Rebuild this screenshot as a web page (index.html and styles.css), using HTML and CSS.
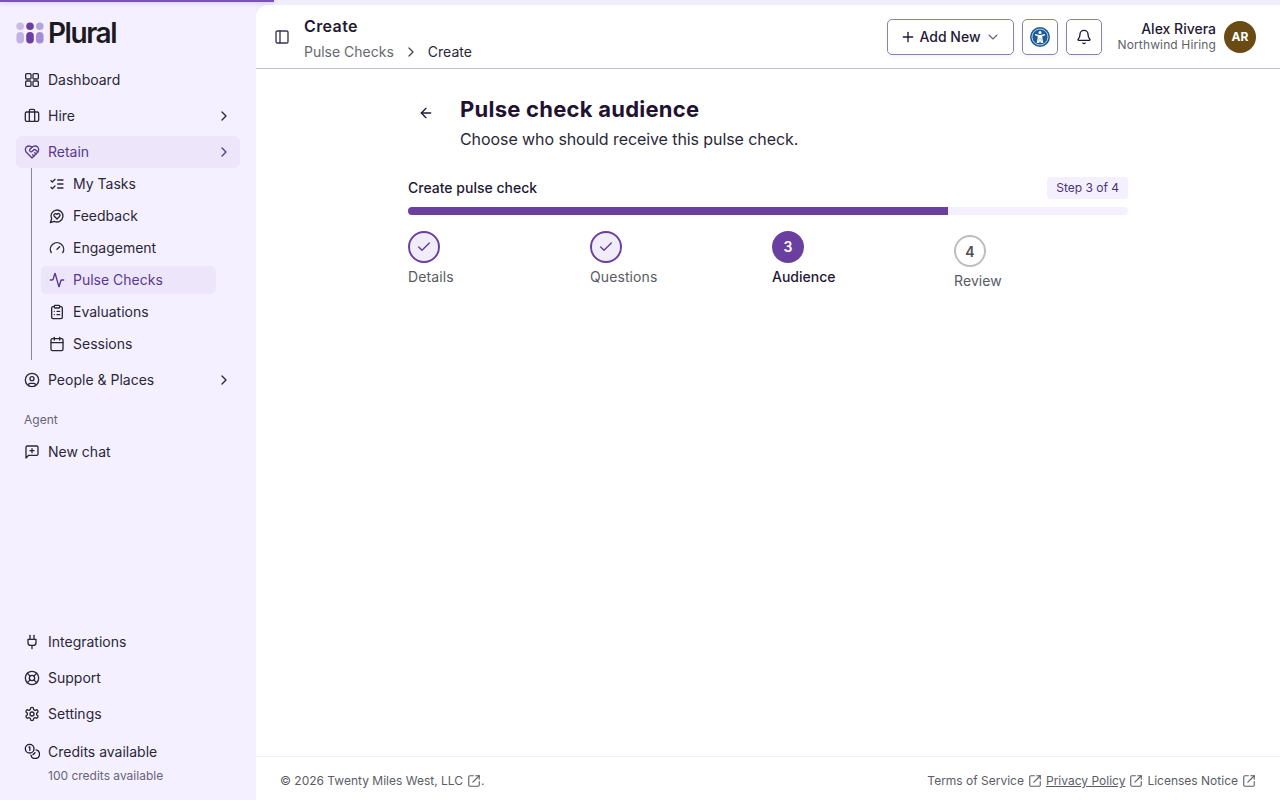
FILE: index.html
```html
<!DOCTYPE html>
<html lang="en">
<head>
<meta charset="utf-8">
<title>Create pulse check</title>
<link rel="stylesheet" href="styles.css">
</head>
<body>
<svg class="defs" width="0" height="0" aria-hidden="true">
  <symbol id="ext" viewBox="0 0 24 24"><path d="M21 13v6a2 2 0 0 1-2 2H5a2 2 0 0 1-2-2V5a2 2 0 0 1 2-2h6"/><path d="M15 3h6v6"/><path d="M10 14 21 3"/></symbol>
  <symbol id="chev" viewBox="0 0 24 24"><path d="m9 18 6-6-6-6"/></symbol>
  <symbol id="check" viewBox="0 0 24 24"><path d="M20 6 9 17l-5-5"/></symbol>
</svg>
<div class="route-progress"></div>
<div class="app">
  <aside class="sidebar">
    <div class="brand">
      <svg class="brand-mark" viewBox="0 0 28 22" width="28" height="22"><circle cx="4.2" cy="4.2" r="3.8" fill="#c9bbe6"/><rect x="0.4" y="10" width="7.6" height="11.6" rx="3.8" fill="#c3b3e2"/><circle cx="14" cy="4.2" r="3.8" fill="#6a3f9f"/><rect x="10.2" y="10" width="7.6" height="11.6" rx="3.8" fill="#6a3f9f"/><circle cx="23.8" cy="4.2" r="3.8" fill="#b7a3da"/><rect x="20" y="10" width="7.6" height="11.6" rx="3.8" fill="#a68dd0"/></svg>
      <span class="brand-name">Plural</span>
    </div>
    <nav class="nav">
      <a class="nav-item"><svg class="ico" viewBox="0 0 24 24"><rect x="2.5" y="2.5" width="8" height="8" rx="1.5"/><rect x="13.5" y="2.5" width="8" height="8" rx="1.5"/><rect x="13.5" y="13.5" width="8" height="8" rx="1.5"/><rect x="2.5" y="13.5" width="8" height="8" rx="1.5"/></svg><span class="grow">Dashboard</span></a>
      <a class="nav-item"><svg class="ico" viewBox="0 0 24 24"><path d="M16 20V4a2 2 0 0 0-2-2h-4a2 2 0 0 0-2 2v16"/><rect x="2" y="6" width="20" height="14" rx="2"/></svg><span class="grow">Hire</span><svg class="ico"><use href="#chev"/></svg></a>
      <a class="nav-item active"><svg class="ico" viewBox="0 0 24 24"><path d="M19 14c1.49-1.46 3-3.21 3-5.5A5.5 5.5 0 0 0 16.5 3c-1.76 0-3 .5-4.5 2-1.5-1.5-2.74-2-4.5-2A5.5 5.5 0 0 0 2 8.5c0 2.3 1.5 4.05 3 5.5l7 7Z"/><path d="M12 5 9.04 7.96a2.17 2.17 0 0 0 0 3.08c.82.82 2.13.85 3 .07l2.07-1.9a2.82 2.82 0 0 1 3.79 0l2.96 2.66"/><path d="m18 15-2-2"/><path d="m15 18-2-2"/></svg><span class="grow">Retain</span><svg class="ico"><use href="#chev"/></svg></a>
      <div class="subnav">
        <a class="sub-item"><span class="sub-inner"><svg class="ico" viewBox="0 0 24 24"><path d="m3 17 2 2 4-4"/><path d="m3 7 2 2 4-4"/><path d="M13 6h8"/><path d="M13 12h8"/><path d="M13 18h8"/></svg><span class="sub-label">My Tasks</span></span></a>
        <a class="sub-item"><span class="sub-inner"><svg class="ico" viewBox="0 0 24 24"><path d="M7.9 20A9 9 0 1 0 4 16.1L2 22Z"/><path d="M15.8 9.2a2.5 2.5 0 0 0-3.5 0l-.3.4-.35-.3a2.42 2.42 0 1 0-3.2 3.6l3.6 3.5 3.6-3.5c1.2-1.2 1.1-2.7.2-3.7"/></svg><span class="sub-label">Feedback</span></span></a>
        <a class="sub-item"><span class="sub-inner"><svg class="ico" viewBox="0 0 24 24"><path d="m12 14 4-4"/><path d="M3.34 19a10 10 0 1 1 17.32 0"/></svg><span class="sub-label">Engagement</span></span></a>
        <a class="sub-item current"><span class="sub-inner"><svg class="ico" viewBox="0 0 24 24"><path d="M22 12h-2.48a2 2 0 0 0-1.93 1.46l-2.35 8.36a.25.25 0 0 1-.48 0L9.24 2.18a.25.25 0 0 0-.48 0l-2.35 8.36A2 2 0 0 1 4.49 12H2"/></svg><span class="sub-label">Pulse Checks</span></span></a>
        <a class="sub-item"><span class="sub-inner"><svg class="ico" viewBox="0 0 24 24"><rect x="8" y="2" width="8" height="4" rx="1"/><path d="M16 4h2a2 2 0 0 1 2 2v14a2 2 0 0 1-2 2H6a2 2 0 0 1-2-2V6a2 2 0 0 1 2-2h2"/><path d="M12 11h4"/><path d="M12 16h4"/><path d="M8 11h.01"/><path d="M8 16h.01"/></svg><span class="sub-label">Evaluations</span></span></a>
        <a class="sub-item"><span class="sub-inner"><svg class="ico" viewBox="0 0 24 24"><path d="M8 2v4"/><path d="M16 2v4"/><rect x="3" y="4" width="18" height="18" rx="2"/><path d="M3 10h18"/></svg><span class="sub-label">Sessions</span></span></a>
      </div>
      <a class="nav-item"><svg class="ico" viewBox="0 0 24 24"><circle cx="12" cy="12" r="10"/><circle cx="12" cy="10" r="3"/><path d="M7 20.662V19a2 2 0 0 1 2-2h6a2 2 0 0 1 2 2v1.662"/></svg><span class="grow">People &amp; Places</span><svg class="ico"><use href="#chev"/></svg></a>
      <div class="nav-label"><span class="sub-label">Agent</span></div>
      <a class="nav-item"><svg class="ico" viewBox="0 0 24 24"><path d="M21 15a2 2 0 0 1-2 2H7l-4 4V5a2 2 0 0 1 2-2h14a2 2 0 0 1 2 2z"/><path d="M12 7v6"/><path d="M9 10h6"/></svg><span class="grow">New chat</span></a>
    </nav>
    <div class="nav nav-bottom">
      <a class="nav-item"><svg class="ico" viewBox="0 0 24 24"><path d="M12 22v-5"/><path d="M9 8V2"/><path d="M15 8V2"/><path d="M18 8v5a4 4 0 0 1-4 4h-4a4 4 0 0 1-4-4V8Z"/></svg><span class="grow">Integrations</span></a>
      <a class="nav-item"><svg class="ico" viewBox="0 0 24 24"><circle cx="12" cy="12" r="10"/><path d="m4.93 4.93 4.24 4.24"/><path d="m14.83 9.17 4.24-4.24"/><path d="m14.83 14.83 4.24 4.24"/><path d="m9.17 14.83-4.24 4.24"/><circle cx="12" cy="12" r="4"/></svg><span class="grow">Support</span></a>
      <a class="nav-item"><svg class="ico" viewBox="0 0 24 24"><path d="M12.22 2h-.44a2 2 0 0 0-2 2v.18a2 2 0 0 1-1 1.73l-.43.25a2 2 0 0 1-2 0l-.15-.08a2 2 0 0 0-2.73.73l-.22.38a2 2 0 0 0 .73 2.73l.15.1a2 2 0 0 1 1 1.72v.51a2 2 0 0 1-1 1.74l-.15.09a2 2 0 0 0-.73 2.73l.22.38a2 2 0 0 0 2.73.73l.15-.08a2 2 0 0 1 2 0l.43.25a2 2 0 0 1 1 1.73V20a2 2 0 0 0 2 2h.44a2 2 0 0 0 2-2v-.18a2 2 0 0 1 1-1.73l.43-.25a2 2 0 0 1 2 0l.15.08a2 2 0 0 0 2.73-.73l.22-.39a2 2 0 0 0-.73-2.73l-.15-.08a2 2 0 0 1-1-1.74v-.5a2 2 0 0 1 1-1.74l.15-.09a2 2 0 0 0 .73-2.73l-.22-.38a2 2 0 0 0-2.73-.73l-.15.08a2 2 0 0 1-2 0l-.43-.25a2 2 0 0 1-1-1.73V4a2 2 0 0 0-2-2z"/><circle cx="12" cy="12" r="3"/></svg><span class="grow">Settings</span></a>
      <div class="credits">
        <svg class="ico credits-ico" viewBox="0 0 24 24"><circle cx="8.5" cy="8.5" r="6.5"/><path d="M7.5 6h1.2v5"/><path d="M18.1 10.4a6.5 6.5 0 1 1-7.7 7.7"/><path d="m13.5 17.5 3-3"/></svg>
        <div>
          <div class="credits-title">Credits available</div>
          <div class="credits-sub">100 credits available</div>
        </div>
      </div>
    </div>
  </aside>
  <div class="main-shell">
  <div class="main">
    <header class="topbar">
      <button class="icon-plain" aria-label="Toggle sidebar"><svg class="ico" viewBox="0 0 24 24"><rect x="3" y="3" width="18" height="18" rx="2"/><path d="M9 3v18"/></svg></button>
      <div class="crumbs">
        <div class="page-title">Create</div>
        <div class="crumb-row"><span class="crumb-link">Pulse Checks</span><svg class="ico crumb-sep"><use href="#chev"/></svg><span>Create</span></div>
      </div>
      <div class="top-actions">
        <button class="btn btn-add"><svg class="ico" viewBox="0 0 24 24"><path d="M5 12h14"/><path d="M12 5v14"/></svg><span>Add New</span><svg class="ico btn-caret" viewBox="0 0 24 24"><path d="m6 9 6 6 6-6"/></svg></button>
        <button class="btn btn-square" aria-label="Accessibility"><svg viewBox="0 0 20 20" width="20" height="20"><circle cx="10" cy="10" r="10" fill="#1c5a99"/><circle cx="10" cy="10" r="8" fill="none" stroke="#fff" stroke-width="0.7"/><circle cx="10" cy="5.6" r="1.5" fill="#fff"/><path d="M5 7.6 8.3 8.5V11.3L7.4 15.4H8.7L10 12 11.3 15.4H12.6L11.7 11.3V8.5L15 7.6" fill="none" stroke="#fff" stroke-width="1.3" stroke-linejoin="round"/><rect x="8.3" y="8" width="3.4" height="3.6" fill="#fff"/></svg></button>
        <button class="btn btn-square" aria-label="Notifications"><svg class="ico" viewBox="0 0 24 24"><path d="M10.268 21a2 2 0 0 0 3.464 0"/><path d="M3.262 15.326A1 1 0 0 0 4 17h16a1 1 0 0 0 .74-1.673C19.41 13.956 18 12.499 18 8A6 6 0 0 0 6 8c0 4.499-1.411 5.956-2.738 7.326"/></svg></button>
        <div class="user">
          <div class="user-text"><div class="user-name">Alex Rivera</div><div class="user-org">Northwind Hiring</div></div>
          <div class="avatar">AR</div>
        </div>
      </div>
    </header>
    <main class="content">
      <div class="wrap">
        <div class="page-head">
          <button class="back" aria-label="Back"><svg class="ico" viewBox="0 0 24 24"><path d="m12 19-7-7 7-7"/><path d="M19 12H5"/></svg></button>
          <div>
            <h1 class="h1">Pulse check audience</h1>
            <p class="lede">Choose who should receive this pulse check.</p>
          </div>
        </div>
        <div class="progress-head"><span class="progress-label">Create pulse check</span><span class="badge"><span class="sub-label">Step 3 of 4</span></span></div>
        <div class="track"><div class="fill"></div></div>
        <ol class="steps">
          <li class="step done"><span class="dot"><svg class="ico"><use href="#check"/></svg></span><span class="step-name">Details</span></li>
          <li class="step done"><span class="dot"><svg class="ico"><use href="#check"/></svg></span><span class="step-name">Questions</span></li>
          <li class="step now"><span class="dot"><span class="sub-label">3</span></span><span class="step-name">Audience</span></li>
          <li class="step todo"><span class="dot">4</span><span class="step-name">Review</span></li>
        </ol>
      </div>
    </main>
    <footer class="footer">
      <div class="foot-item"><span>© 2026 Twenty Miles West, LLC</span><svg class="ext"><use href="#ext"/></svg><span class="foot-dot">.</span></div>
      <div class="foot-links">
        <span class="foot-item"><span>Terms of Service</span><svg class="ext"><use href="#ext"/></svg></span>
        <span class="foot-item"><u>Privacy Policy</u><svg class="ext"><use href="#ext"/></svg></span>
        <span class="foot-item"><span>Licenses Notice</span><svg class="ext"><use href="#ext"/></svg></span>
      </div>
    </footer>
  </div>
  </div>
</div>
</body>
</html>
```
FILE: styles.css
```css
* { box-sizing: border-box; }
html, body { margin: 0; height: 100%; }
body {
  font-family: Inter, "Liberation Sans", sans-serif;
  color: #1f1933;
  background: #f5f0ff;
  overflow: hidden;
}
.defs { position: absolute; }
.route-progress {
  position: fixed;
  top: 0;
  left: 0;
  width: 274px;
  height: 2px;
  background: #7a50c4;
  box-shadow: 0 0 4px rgba(122, 80, 196, .5);
  z-index: 5;
}
.app { display: flex; height: 800px; }
.ico {
  width: 16px;
  height: 16px;
  flex: none;
  fill: none;
  stroke: currentColor;
  stroke-width: 2;
  stroke-linecap: round;
  stroke-linejoin: round;
}

/* Sidebar */
.sidebar {
  width: 256px;
  flex: none;
  display: flex;
  flex-direction: column;
  padding: 0 16px;
}
.brand {
  height: 64px;
  display: flex;
  align-items: center;
  gap: 4px;
  padding-top: 2px;
}
.brand-mark { flex: none; }
.brand-name {
  font-size: 28px;
  font-weight: 600;
  letter-spacing: -1.45px;
  color: #1b1a22;
  line-height: 1;
}
.nav { display: flex; flex-direction: column; gap: 4px; font-size: 14px; }
.nav-bottom { margin-top: auto; }
.nav-item {
  height: 32px;
  display: flex;
  align-items: center;
  gap: 8px;
  padding: 0 8px;
  border-radius: 6px;
  color: #2a2838;
}
.grow { flex: 1; margin-bottom: 2px; }
.sub-label { margin-bottom: 2px; }
.nav-item.active { background: #ede6fb; color: #593a8c; }
.subnav {
  margin: -4px 0 0 15px;
  border-left: 1px solid #8e86a6;
  padding-left: 9px;
  width: 185px;
}
.sub-item { display: flex; align-items: center; height: 32px; color: #2a2838; }
.sub-inner {
  flex: 1;
  height: 28px;
  display: flex;
  align-items: center;
  gap: 8px;
  padding-left: 8px;
  border-radius: 5px;
}
.sub-item.current .sub-inner { background: #ede6fb; color: #593a8c; }
.nav-label {
  font-size: 12px;
  color: #67637a;
  padding: 0 8px;
  height: 32px;
  display: flex;
  align-items: center;
  margin-bottom: -4px;
  margin-top: 4px;
}
.credits {
  display: flex;
  gap: 8px;
  padding: 10px 8px 0;
  height: 64px;
  margin-bottom: 2px;
}
.credits-ico { margin-top: -1px; }
.credits-title { line-height: 16px; color: #2a2838; }
.credits-sub { font-size: 12px; line-height: 16px; margin-top: 8px; color: #67637a; }

/* Main */
.main-shell {
  flex: 1;
  min-width: 0;
  padding-top: 5px;
  background: #f0eefb;
  display: flex;
}
.main {
  flex: 1;
  min-width: 0;
  background: #fff;
  border-top-left-radius: 12px;
  display: flex;
  flex-direction: column;
}
.topbar {
  height: 64px;
  flex: none;
  display: flex;
  align-items: center;
  padding: 0 24px 0 18px;
  border-bottom: 1px solid #c4bfd2;
}
.icon-plain {
  border: 0;
  background: none;
  padding: 0;
  color: #3a3450;
  display: flex;
  margin: 0 14px 0 0;
  width: 16px;
}
.crumbs { display: flex; flex-direction: column; padding-top: 6px; }
.page-title { font-size: 16px; font-weight: 600; line-height: 24px; color: #1f1933; letter-spacing: .4px; margin-top: -3px; }
.crumb-row { display: flex; align-items: center; font-size: 14px; line-height: 20px; margin-top: 4px; color: #2a2838; }
.crumb-link { color: #68686f; }
.crumb-sep { margin: 0 9px; color: #4c4a58; width: 16px; }
.top-actions { margin-left: auto; display: flex; align-items: center; gap: 8px; }
.btn {
  height: 36px;
  display: flex;
  align-items: center;
  justify-content: center;
  border: 1px solid #8a82ad;
  border-radius: 5px;
  background: #fff;
  color: #1f1933;
  font: 500 14px Inter, "Liberation Sans", sans-serif;
  box-shadow: 0 2px 4px rgba(60, 50, 90, .06);
}
.btn-add { width: 127px; gap: 4px; padding: 0; }
.btn-caret { color: #67637a; stroke-width: 1.6; }
.btn-square { width: 36px; padding: 0; }
.user { display: flex; align-items: center; gap: 8px; margin-left: 8px; }
.user-text { text-align: right; }
.user-name { font-size: 14px; font-weight: 500; line-height: 16px; color: #1f1933; }
.user-org { font-size: 12px; line-height: 16px; color: #5f5f69; letter-spacing: .13px; }
.avatar {
  width: 32px;
  height: 32px;
  border-radius: 50%;
  background: #6b4b14;
  color: #fff;
  display: flex;
  align-items: center;
  justify-content: center;
  font-size: 12px;
  font-weight: 700;
}

/* Content */
.content { flex: 1; min-height: 0; padding-top: 24px; }
.wrap { width: 720px; margin: 0 auto; }
.page-head { display: flex; align-items: flex-start; height: 84px; }
.back {
  width: 36px;
  height: 36px;
  border: 0;
  background: none;
  padding: 0;
  margin: 2px 16px 0 0;
  display: flex;
  align-items: center;
  justify-content: center;
  color: #1f1933;
}
.h1 { margin: 0; font-size: 22px; line-height: 32px; font-weight: 700; color: #1f1233; letter-spacing: .25px; }
.lede { margin: 0; font-size: 16px; line-height: 24px; color: #2a2838; margin-top: 2px; letter-spacing: -.08px; }
.progress-head { display: flex; align-items: center; justify-content: space-between; height: 22px; }
.progress-label { font-size: 14px; font-weight: 500; color: #1f1933; margin-bottom: 2px; }
.badge {
  height: 22px;
  padding: 0 9px;
  display: flex;
  align-items: center;
  font-size: 12px;
  font-weight: 400;
  border-radius: 4px;
  background: #f5f0ff;
  color: #4a3278;
}
.track { height: 8px; margin-top: 8px; border-radius: 4px; background: #f5f0ff; overflow: hidden; }
.fill { width: 75%; height: 100%; background: #6a3f9f; }
.steps {
  list-style: none;
  margin: 16px 0 0;
  padding: 0;
  display: grid;
  grid-template-columns: repeat(4, 1fr);
  gap: 8px;
}
.step { display: flex; flex-direction: column; align-items: flex-start; gap: 4px; font-size: 14px; color: #5a5a63; }
.step-name { line-height: 20px; letter-spacing: .1px; }
.dot {
  width: 32px;
  height: 32px;
  border-radius: 50%;
  display: flex;
  align-items: center;
  justify-content: center;
  font-size: 14px;
  font-weight: 600;
  border: 2px solid transparent;
}
.done .dot { border-color: #6a3f9f; background: #f1ecfa; color: #5f3a90; }
.now .dot { background: #6a3f9f; color: #fff; }
.now .step-name { color: #1f1933; font-weight: 500; letter-spacing: 0; }
.todo { padding-top: 4px; }
.todo .dot { border-color: #bdbdbd; background: #fff; color: #4d4d57; }

/* Footer */
.footer {
  height: 44px;
  flex: none;
  border-top: 1px solid #f3f0fa;
  display: flex;
  align-items: center;
  justify-content: space-between;
  padding: 4px 24px 0;
  font-size: 12px;
  color: #5c5c65;
}
.foot-links { display: flex; gap: 4px; }
.foot-item { display: inline-flex; align-items: center; gap: 4px; }
.foot-dot { margin-left: -4px; }
.ext {
  width: 14px;
  height: 14px;
  fill: none;
  stroke: currentColor;
  stroke-width: 1.9;
  stroke-linecap: round;
  stroke-linejoin: round;
}
```
